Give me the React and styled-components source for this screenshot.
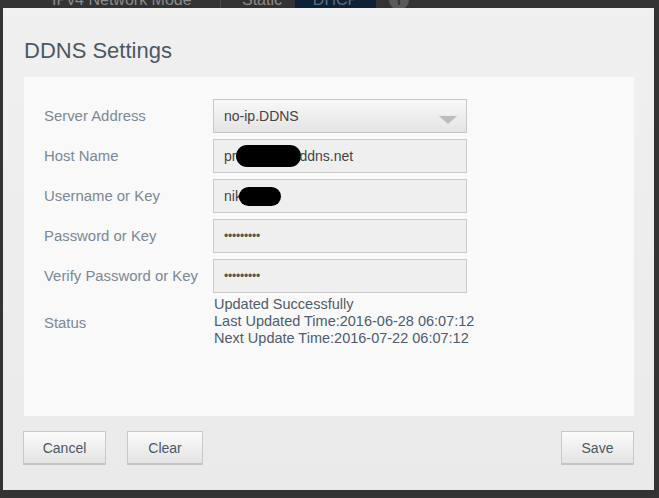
import React from 'react'
import styled, { createGlobalStyle } from 'styled-components'

const Global = createGlobalStyle`
  html, body { margin: 0; padding: 0; }
  body {
    background: #333333;
    font-family: "Liberation Sans", Arial, sans-serif;
    width: 659px; height: 498px; overflow: hidden;
  }
`

const Page = styled.div`
  position: relative; display: flow-root;
  width: 659px; height: 498px;
`

// header bar of the page behind the dialog, mostly hidden
const TopBar = styled.div`
  display: flex; align-items: center;
  height: 30px; margin-top: -15px;
  color: #8c8c8c; font-size: 16px;
`
const TopLabel = styled.div`
  padding-left: 52px; width: 168px;
  border-right: 1px solid #4a4a4a; height: 30px; line-height: 30px;
`
const TopOption = styled.div`
  width: 53px; padding-left: 21px; height: 30px; line-height: 30px;
`
const TopTab = styled.div`
  width: 81px; height: 30px; line-height: 30px;
  background: #0d2236; color: #5c6f82; text-align: center;
`
const InfoDot = styled.div`
  width: 20px; height: 20px; margin-left: 13px; border-radius: 50%;
  background: #5a5a5a; color: #333; font-weight: bold;
  font-size: 14px; text-align: center; line-height: 20px;
`

const Modal = styled.div`
  position: absolute; left: 3px; top: 8px;
  width: 651px; height: 482px; box-sizing: border-box;
  background: linear-gradient(#f0f0f0, #eaeaea);
  padding: 30px 20px 0 21px;
  display: flex; flex-direction: column;
`
const Title = styled.h1`
  margin: 0 0 13px; font-weight: normal;
  font-size: 22px; line-height: 26px; color: #4b5865;
`
const Panel = styled.div`
  background: #f9f9f9; height: 339px; box-sizing: border-box;
  padding: 22px 20px 0;
  display: flex; flex-direction: column; gap: 6px;
`
const Row = styled.div`
  display: flex; align-items: center;
  min-height: 34px;
`
const Label = styled.div`
  width: 169px; font-size: 14.9px; color: #7b8895;
`
const Field = styled.div`
  width: 254px; height: 34px; box-sizing: border-box;
  border: 1px solid #c9c9c9;
  background: ${p => p.select ? 'linear-gradient(#f8f8f8, #e4e4e4)' : '#efefef'};
  border-bottom-color: ${p => p.select ? '#c2c2c2' : '#c9c9c9'};
  padding-left: 10px; display: flex; align-items: center;
  font-size: 14px; color: #444; position: relative;
`
const Arrow = styled.span`
  position: absolute; right: 9px; top: 16px;
  border-left: 9px solid transparent; border-right: 9px solid transparent;
  border-top: 8px solid #bdbdbd;
`
const Blob = styled.span`
  display: inline-block; background: #000;
  width: ${p => p.w}px; height: ${p => p.h}px;
  border-radius: 12px; margin: 0 ${p => p.mr || 0}px 0 ${p => p.ml || 0}px;
`
const Dots = styled.span`
  font-size: 12px; color: #555; letter-spacing: -0.2px;
`
const StatusText = styled.div`
  font-size: 14.5px; line-height: 17px; color: #4d5d6d;
  margin-top: -3px; padding-left: 1px;
`
const Footer = styled.div`
  display: flex; gap: 21px; margin-top: 15px; margin-left: -1px;
`
const Button = styled.button`
  width: ${p => p.w}px; height: 34px; padding: 0;
  font-family: inherit; font-size: 14px; color: #4b5865;
  background: linear-gradient(#fbfbfb, #e3e3e3);
  border: 1px solid #c9c9c9; border-bottom: 2px solid #c4c4c4;
  ${p => p.right && 'margin-left: auto;'}
`

export default function App() {
  return (
    <Page>
      <Global />
      <TopBar>
        <TopLabel>IPv4 Network Mode</TopLabel>
        <TopOption>Static</TopOption>
        <TopTab>DHCP</TopTab>
        <InfoDot>i</InfoDot>
      </TopBar>
      <Modal>
        <Title>DDNS Settings</Title>
        <Panel>
          <Row>
            <Label>Server Address</Label>
            <Field select>no-ip.DDNS<Arrow /></Field>
          </Row>
          <Row>
            <Label>Host Name</Label>
            <Field>pr<Blob w={65} h={22} ml={0} mr={-2} />ddns.net</Field>
          </Row>
          <Row>
            <Label>Username or Key</Label>
            <Field>nik<Blob w={42} h={19} ml={-3} /></Field>
          </Row>
          <Row>
            <Label>Password or Key</Label>
            <Field><Dots>•••••••••</Dots></Field>
          </Row>
          <Row>
            <Label>Verify Password or Key</Label>
            <Field><Dots>•••••••••</Dots></Field>
          </Row>
          <Row>
            <Label>Status</Label>
            <StatusText>
              Updated Successfully<br />
              Last Updated Time:2016-06-28 06:07:12<br />
              Next Update Time:2016-07-22 06:07:12
            </StatusText>
          </Row>
        </Panel>
        <Footer>
          <Button w={83}>Cancel</Button>
          <Button w={76}>Clear</Button>
          <Button w={73} right>Save</Button>
        </Footer>
      </Modal>
    </Page>
  )
}
